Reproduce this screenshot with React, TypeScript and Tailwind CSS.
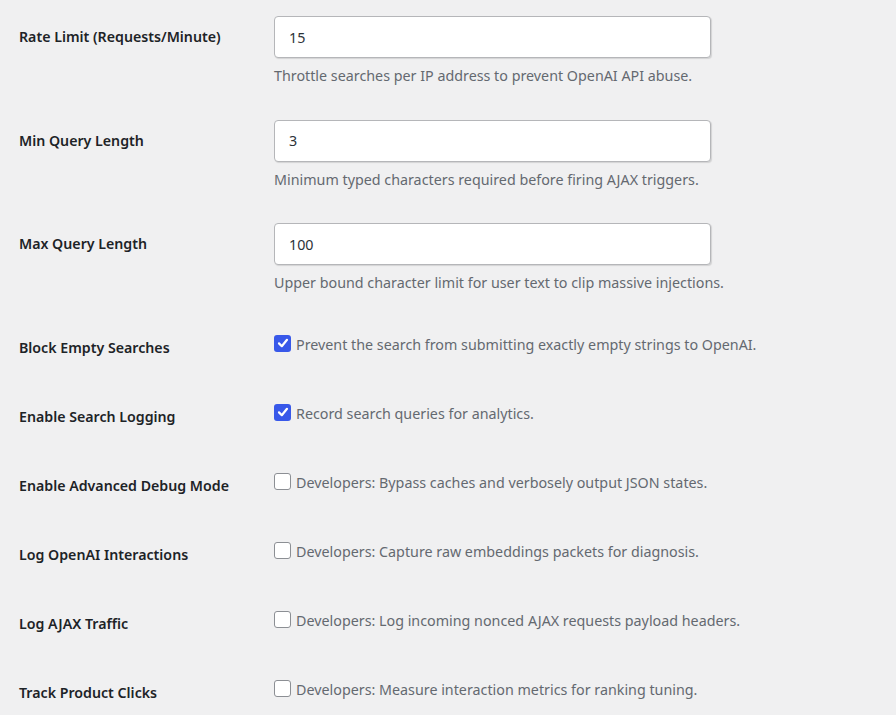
import React from 'react';

type TextRow = { kind: 'text'; label: string; value: string; help: string };
type CheckRow = { kind: 'check'; label: string; checked: boolean; help: string };
type Row = TextRow | CheckRow;

const rows: Row[] = [
    { kind: 'text', label: 'Rate Limit (Requests/Minute)', value: '15', help: 'Throttle searches per IP address to prevent OpenAI API abuse.' },
    { kind: 'text', label: 'Min Query Length', value: '3', help: 'Minimum typed characters required before firing AJAX triggers.' },
    { kind: 'text', label: 'Max Query Length', value: '100', help: 'Upper bound character limit for user text to clip massive injections.' },
    { kind: 'check', label: 'Block Empty Searches', checked: true, help: 'Prevent the search from submitting exactly empty strings to OpenAI.' },
    { kind: 'check', label: 'Enable Search Logging', checked: true, help: 'Record search queries for analytics.' },
    { kind: 'check', label: 'Enable Advanced Debug Mode', checked: false, help: 'Developers: Bypass caches and verbosely output JSON states.' },
    { kind: 'check', label: 'Log OpenAI Interactions', checked: false, help: 'Developers: Capture raw embeddings packets for diagnosis.' },
    { kind: 'check', label: 'Log AJAX Traffic', checked: false, help: 'Developers: Log incoming nonced AJAX requests payload headers.' },
    { kind: 'check', label: 'Track Product Clicks', checked: false, help: 'Developers: Measure interaction metrics for ranking tuning.' },
];

const Box: React.FC<{ checked: boolean }> = ({ checked }) =>
    checked ? (
        <span className="w-[17px] h-[17px] shrink-0 rounded-[3px] bg-[#3858e9] flex items-center justify-center">
            <svg width="12" height="12" viewBox="0 0 12 12" fill="none">
                <path d="M2 6.4 L4.8 9.2 L10 2.8" stroke="#fff" strokeWidth="2.2" strokeLinecap="round" strokeLinejoin="round" />
            </svg>
        </span>
    ) : (
        <span className="w-[17px] h-[17px] shrink-0 rounded-[3px] bg-white border border-[#8c8f94]" />
    );

const App: React.FC = () => {
    return (
        <div className="w-[896px] h-[715px] bg-[#f0f0f1] overflow-hidden font-['Noto_Sans',sans-serif] text-[14.3px]">
            {rows.map((r) =>
                r.kind === 'text' ? (
                    <div key={r.label} className="flex h-[103.5px] pt-4">
                        <div className="w-[274px] pl-[19px] pt-[11px] leading-5 font-semibold text-[14.2px] text-[#1d2327] shrink-0">{r.label}</div>
                        <div>
                            <div className="w-[437px] h-[42px] bg-white border border-[#b5b6b9] rounded-[4px] shadow-[1px_1px_1px_rgba(0,0,0,0.12)] flex items-center px-[14px] pt-px text-[#2c3338]">
                                {r.value}
                            </div>
                            <p className="mt-[8px] leading-5 text-[#646970]">{r.help}</p>
                        </div>
                    </div>
                ) : (
                    <div key={r.label} className="flex h-[69px] pt-[24px]">
                        <div className="w-[274px] pl-[19px] pt-[3px] leading-5 font-semibold text-[14.2px] text-[#1d2327] shrink-0">{r.label}</div>
                        <label className="flex items-start gap-[5px] leading-5 text-[#646970]">
                            <Box checked={r.checked} />
                            <span>{r.help}</span>
                        </label>
                    </div>
                )
            )}
        </div>
    );
};

export default App;
